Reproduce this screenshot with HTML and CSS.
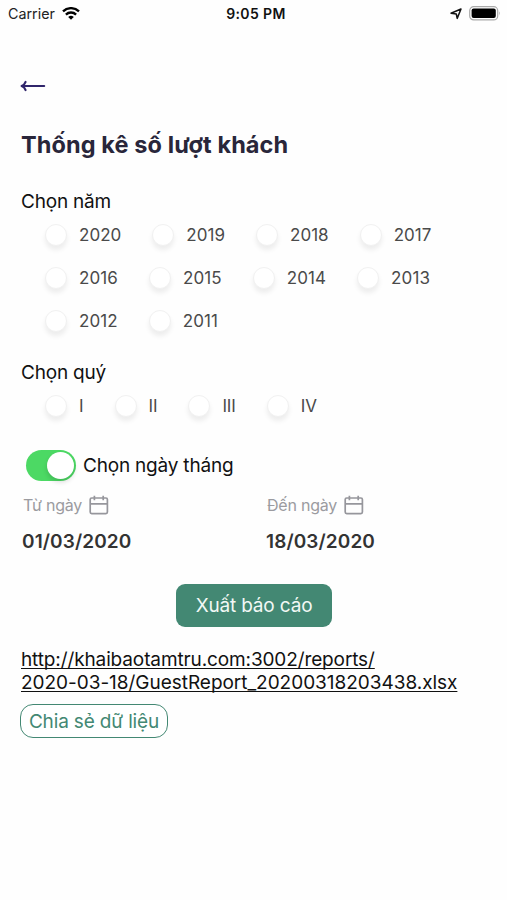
FILE: index.html
```html
<!DOCTYPE html>
<html lang="vi">
<head>
<meta charset="utf-8">
<meta name="viewport" content="width=device-width">
<title>Thống kê số lượt khách</title>
<link rel="stylesheet" href="styles.css">
</head>
<body>
<header class="status">
  <div class="carrier"><span>Carrier</span>
    <svg width="18" height="13" viewBox="0 0 18 13"><g fill="none" stroke="#000" stroke-width="2.3"><path d="M1 4.4a11.4 11.4 0 0 1 16 0"/><path d="M3.9 7.6a7.2 7.2 0 0 1 10.2 0"/></g><path d="M9 12.8 6.2 10a4 4 0 0 1 5.6 0z"/></svg>
  </div>
  <div class="time">9:05 PM</div>
  <div class="power">
    <svg width="12" height="12" viewBox="0 0 12 12"><path d="M11 1 7.2 10.4 6.3 6 1 5.2z" fill="none" stroke="#111" stroke-width="1.5" stroke-linejoin="round"/></svg>
    <svg width="32" height="15" viewBox="0 0 32 15"><rect x=".7" y=".7" width="28" height="13.2" rx="4" fill="#fff" stroke="#aaa" stroke-width="1.2"/><rect x="2.6" y="2.6" width="24.2" height="9.4" rx="2" fill="#000"/><path d="M30.2 5.2q1.5 2.1 0 4.2z" fill="#999"/></svg>
  </div>
</header>
<main>
  <svg class="back" width="26" height="14" viewBox="0 0 26 14"><path d="M24.2 7H2M5.6 2.9Q4.6 5.9 1.6 7 4.6 8.1 5.6 11.1" fill="none" stroke="#30256b" stroke-width="2.1" stroke-linecap="round" stroke-linejoin="round"/></svg>
  <h1>Thống kê số lượt khách</h1>
  <h2 class="year-title">Chọn năm</h2>
  <div class="options years">
    <div class="row first"><label><i></i><span>2020</span></label><label><i></i><span>2019</span></label><label><i></i><span>2018</span></label><label><i></i><span>2017</span></label></div>
    <div class="row"><label><i></i><span>2016</span></label><label><i></i><span>2015</span></label><label><i></i><span>2014</span></label><label><i></i><span>2013</span></label></div>
    <div class="row"><label><i></i><span>2012</span></label><label><i></i><span>2011</span></label></div>
  </div>
  <h2 class="quarter-title">Chọn quý</h2>
  <div class="options quarters">
    <div class="row"><label><i></i><span>I</span></label><label><i></i><span>II</span></label><label><i></i><span>III</span></label><label><i></i><span>IV</span></label></div>
  </div>
  <div class="toggle"><div class="switch"><i></i></div><span>Chọn ngày tháng</span></div>
  <div class="dates">
    <div class="date">
      <div class="caption"><span>Từ ngày</span><svg width="20" height="20" viewBox="0 0 20 20"><g fill="none" stroke="#96969c" stroke-width="1.7"><rect x="1.2" y="3" width="17.2" height="15.6" rx="1.5"/><path d="M1.2 8.8h17.2M5.4.8v4.4M14.2.8v4.4"/></g></svg></div>
      <div class="value">01/03/2020</div>
    </div>
    <div class="date">
      <div class="caption"><span>Đến ngày</span><svg width="20" height="20" viewBox="0 0 20 20"><g fill="none" stroke="#96969c" stroke-width="1.7"><rect x="1.2" y="3" width="17.2" height="15.6" rx="1.5"/><path d="M1.2 8.8h17.2M5.4.8v4.4M14.2.8v4.4"/></g></svg></div>
      <div class="value">18/03/2020</div>
    </div>
  </div>
  <button class="export">Xuất báo cáo</button>
  <a class="link"><span class="host">http://khaibaotamtru.com:3002/reports/</span><br><span>2020-03-18/GuestReport_20200318203438.xlsx</span></a>
  <button class="share">Chia sẻ dữ liệu</button>
</main>
</body>
</html>
```
FILE: styles.css
```css
* { box-sizing: border-box; }
body { margin: 0; background: #fefefe; color: #111; font-family: Inter, "Liberation Sans", sans-serif; }
svg { display: block; flex: none; }
button { font: inherit; padding: 0; }
i { display: block; flex: none; border-radius: 50%; background: #fff; }
.status { display: grid; grid-template-columns: 1fr auto 1fr; align-items: center; height: 27px; padding: 0 6px 0 8px; }
.carrier, .power { display: flex; align-items: center; }
.carrier { gap: 7px; font-size: 14.3px; color: #222; }
.time { padding-left: 3px; font-size: 14px; font-weight: 600; letter-spacing: .4px; }
.power { justify-content: flex-end; gap: 7px; }
main { display: flex; flex-direction: column; align-items: flex-start; padding-left: 20px; }
.back { margin-top: 52px; }
h1 { margin: 37px 0 0 1px; font-size: 23.5px; line-height: 30px; font-weight: 700; letter-spacing: .1px; color: #29263a; white-space: nowrap; }
h2 { margin: 0 0 0 1px; font-size: 19px; line-height: 24px; font-weight: 400; letter-spacing: -.2px; }
.year-title { margin-top: 30px; }
.quarter-title { margin-top: 19px; }
.options { padding-left: 25px; font-size: 17px; color: #4a4a4a; }
.years { margin-top: -1px; }
.row { display: flex; align-items: center; gap: 31px; height: 43px; letter-spacing: .1px; }
.row.first { letter-spacing: .03px; }
.row label { display: flex; align-items: center; gap: 12px; }
.row i { width: 22px; height: 22px; border: 1px solid #f1f1f1; box-shadow: 0 4px 5px rgba(0,0,0,.07); }
.quarters { margin-top: -1px; }
.quarters .row { height: 44px; gap: 31.2px; letter-spacing: -.2px; }
.toggle { display: flex; align-items: center; gap: 7px; margin: 22px 0 0 6px; font-size: 19px; line-height: 31px; letter-spacing: -.2px; }
.switch { display: flex; justify-content: flex-end; width: 50px; height: 31px; padding: 2px; border-radius: 16px; background: #4cd964; }
.switch i { width: 27px; height: 27px; box-shadow: 0 3px 5px rgba(0,0,0,.15); }
.dates { display: grid; grid-template-columns: 244px 200px; margin: 14px 0 0 2px; }
.caption { display: flex; align-items: center; gap: 7px; height: 20px; padding-left: 1px; font-size: 16px; letter-spacing: -.22px; color: #9b9ba0; }
.value { margin-top: 15px; font-size: 19px; line-height: 24px; font-weight: 600; letter-spacing: .1px; color: #333; }
.export { width: 156px; height: 43px; margin: 30px 0 0 156px; border: 0; border-radius: 9px; background: #438873; color: #f2f8f5; font-size: 19px; letter-spacing: -.17px; }
.link { margin: 21px 0 0 1px; font-size: 19px; line-height: 23px; letter-spacing: -.03px; text-decoration: underline; text-decoration-thickness: 1.4px; text-underline-offset: 2px; text-decoration-skip-ink: none; white-space: nowrap; }
.host { letter-spacing: -.12px; }
.share { width: 148px; height: 34px; margin-top: 10px; border: 1.4px solid #438873; border-radius: 13px; background: #fff; color: #438873; font-size: 19px; letter-spacing: -.15px; }
```
